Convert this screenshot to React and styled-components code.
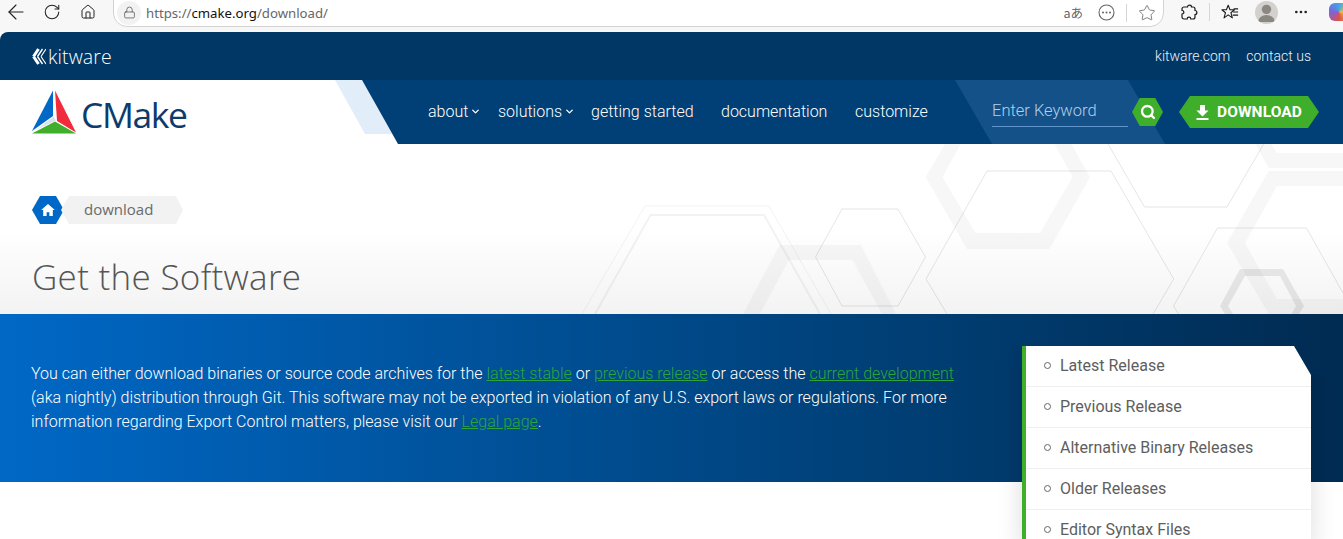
import styled, { createGlobalStyle } from 'styled-components';
import { ArrowLeft, RotateCw, Home, Lock, Star, Ellipsis, ChevronDown, Search } from 'lucide-react';

const GlobalStyle = createGlobalStyle`
    html, body {
        margin: 0;
        padding: 0;
        background: #ffffff;
        overflow: hidden;
    }
    * {
        box-sizing: border-box;
    }
`

const links = ['Latest Release', 'Previous Release', 'Alternative Binary Releases', 'Older Releases', 'Editor Syntax Files'];

function CMakeMark() {
    return (
        <svg width="44" height="44" viewBox="0 0 44 44">
            <polygon points="21,0.5 0,41 21,26" fill="#0068c6" />
            <polygon points="23,0.5 44,42.5 25,31" fill="#f12a3c" />
            <polygon points="0,43.5 23,31.5 44,43.5" fill="#3fae2a" />
            <polygon points="21.5,26.5 24,30.5 5,39.5" fill="#d9e2ec" />
        </svg>
    );
}

function KitwareMark() {
    return (
        <svg width="14" height="17" viewBox="0 0 14 17" fill="none" stroke="#fff">
            <path d="M1.5 8.5 L6.5 1 M1.5 8.5 L6.5 16" strokeWidth="3" />
            <path d="M5.5 8.5 L10.5 1 M5.5 8.5 L10.5 16" strokeWidth="1.4" />
            <path d="M9 8.5 L14 1 M9 8.5 L14 16" strokeWidth="1.2" />
        </svg>
    );
}

function MoreCircleIcon() {
    return (
        <svg width="17" height="17" viewBox="0 0 17 17" fill="none" stroke="#666">
            <circle cx="8.5" cy="8.5" r="7.5" strokeWidth="1.1" />
            <g fill="#666" stroke="none">
                <circle cx="5" cy="8.5" r="1" />
                <circle cx="8.5" cy="8.5" r="1" />
                <circle cx="12" cy="8.5" r="1" />
            </g>
        </svg>
    );
}

function PuzzleIcon() {
    return (
        <svg width="18" height="18" viewBox="0 0 18 18" fill="none" stroke="#1a1a1a" strokeWidth="1.2">
            <path d="M7.5 4 C7.5 1.5 11.5 1.5 11.5 4 H13 A2 2 0 0 1 15 6 V7.5 C17.5 7.5 17.5 11.5 15 11.5 V14 A2 2 0 0 1 13 16 H10.8 C10.8 13.5 7.2 13.5 7.2 16 H4 A2 2 0 0 1 2 14 V11 C4.5 11 4.5 7.5 2 7.5 V6 A2 2 0 0 1 4 4 Z" />
        </svg>
    );
}

function FavoritesIcon() {
    return (
        <svg width="18" height="18" viewBox="0 0 20 20" fill="none" stroke="#1a1a1a" strokeWidth="1.2">
            <path d="M8 2.5 L10 7.5 H15 L11 10.8 L12.6 16.5 L8 13.2 L3.4 16.5 L5 10.8 L1 7.5 H6 Z" strokeLinejoin="round" />
            <path d="M14 6.5 H19 M13.5 10 H19 M13 13.5 H19" />
        </svg>
    );
}

function DownloadGlyph() {
    return (
        <svg width="13" height="15" viewBox="0 0 13 15" fill="#fff">
            <path d="M4 0 H9 V5.5 H12.5 L6.5 11.5 L0.5 5.5 H4 Z" />
            <rect x="0.5" y="13" width="12" height="2" />
        </svg>
    );
}

function HexLines() {
    return (
        <HeroArt viewBox="0 144 1343 170" preserveAspectRatio="none">
            <g fill="#000" fillOpacity="0.03" fillRule="evenodd">
                <path d="M945 144 L925.5 177 L967 249 H1049.6 L1090 177 L1071.5 144 H1054.5 L1072.5 177 L1040 233 H975.6 L942.5 177 L961 144 Z" />
                <path d="M1255.4 144 L1268.6 168 H1343 V153 H1277 L1271 144 Z" />
                <path d="M1268.6 171 L1227 243 L1268.6 314 H1343 V299 H1277 L1245 243 L1277 186 H1343 V171 Z" />
                <path d="M779.5 245 L743 314 H760 L789 260 H852.5 L882 314 H896 L861 245 Z" />
                <path d="M1240 269 L1220 306 L1225 314 H1233 L1228 306 L1245 276 H1280 L1296 306 L1291.5 314 H1299 L1304 306 L1283 269 Z" fillOpacity="0.08" />
            </g>
            <g fill="none" stroke="#000" strokeOpacity="0.1" strokeWidth="1">
                <path d="M582 314 L645 206 H769 L831 314" strokeOpacity="0.05" />
                <path d="M595 314 L650.5 215 H764 L820 314" strokeWidth="2" strokeOpacity="0.05" />
                <path d="M842 209 H898 L925.5 257 L898 306 H842 L815.5 257 Z" />
                <path d="M947 314 L926 279 L987 171 H1111 L1173.7 279 L1153 314" />
                <path d="M1108 144 L1144.5 207 H1227 L1263.7 144" />
                <path d="M1178.5 314 L1173.6 306 L1217.5 228 H1306.5 L1343 293" />
            </g>
        </HeroArt>
    );
}

export default function App() {
    return (
        <Page>
            <GlobalStyle />
            <BrowserBar>
                <ToolIcon><ArrowLeft size={24} strokeWidth={1.1} /></ToolIcon>
                <ToolIcon><RotateCw size={18} strokeWidth={1.4} /></ToolIcon>
                <ToolIcon><Home size={16} strokeWidth={1.5} /></ToolIcon>
                <AddressBar>
                    <LockBadge><Lock size={13} strokeWidth={1.4} /></LockBadge>
                    <Url>https://<b>cmake.org</b>/download/</Url>
                    <AddressTools>
                        <ReadAloud>aあ</ReadAloud>
                        <ToolIcon><MoreCircleIcon /></ToolIcon>
                        <Divider $space={4} />
                        <ToolIcon><Star size={18} strokeWidth={1.1} /></ToolIcon>
                    </AddressTools>
                </AddressBar>
                <BrowserTools>
                    <ToolIcon><PuzzleIcon /></ToolIcon>
                    <Divider $space={2} />
                    <ToolIcon><FavoritesIcon /></ToolIcon>
                    <Avatar>
                        <svg width="23" height="23" viewBox="0 0 22 22" fill="#8b8883">
                            <circle cx="11" cy="8" r="4.5" />
                            <path d="M3 20 a8 6.5 0 0 1 16 0 Z" />
                        </svg>
                    </Avatar>
                    <ToolIcon><Ellipsis size={16} strokeWidth={2} /></ToolIcon>
                    <Copilot />
                </BrowserTools>
            </BrowserBar>

            <Site>
                <TopBar>
                    <KitwareLogo><KitwareMark /><span>kitware</span></KitwareLogo>
                    <TopLinks>
                        <a>kitware.com</a>
                        <a>contact us</a>
                    </TopLinks>
                </TopBar>

                <NavRow>
                    <Brand>
                        <CMakeMark />
                        <BrandName>CMake</BrandName>
                    </Brand>
                    <NavPanel>
                        <NavItem $width={70}>about<ChevronDown size={11} strokeWidth={3} /></NavItem>
                        <NavItem $width={93}>solutions<ChevronDown size={11} strokeWidth={3} /></NavItem>
                        <NavItem $width={130}>getting started</NavItem>
                        <NavItem $width={134}>documentation</NavItem>
                        <NavItem $width={100}>customize</NavItem>
                        <SearchPanel>
                            <SearchField>Enter Keyword</SearchField>
                            <SearchButton><Search size={16} strokeWidth={3.4} color="#fff" /></SearchButton>
                        </SearchPanel>
                        <DownloadButton><DownloadGlyph />DOWNLOAD</DownloadButton>
                    </NavPanel>
                </NavRow>

                <Hero>
                    <HexLines />
                    <Breadcrumb>
                        <HomeHex>
                            <svg width="14" height="12" viewBox="0 0 16 14" fill="#fff">
                                <path d="M8 0 L16 7 H13.6 V14 H9.6 V9.5 H6.4 V14 H2.4 V7 H0 Z" />
                            </svg>
                        </HomeHex>
                        <Crumb>download</Crumb>
                    </Breadcrumb>
                    <Title>Get the Software</Title>
                </Hero>

                <Intro>
                    <IntroText>
                        You can either download binaries or source code archives for the <a>latest stable</a> or <a>previous release</a> or access the <a>current development</a> (aka nightly) distribution through Git. This software may not be exported in violation of any U.S. export laws or regulations. For more information regarding Export Control matters, please visit our <a>Legal page</a>.
                    </IntroText>
                    <SideMenu>
                        {links.map((link) => (
                            <SideItem key={link}><Bullet />{link}</SideItem>
                        ))}
                    </SideMenu>
                </Intro>
            </Site>
        </Page>
    );
}

const Page = styled.div`
    width: 1343px;
    height: 539px;
    overflow: hidden;
    background: #ffffff;
    font-family: Roboto, "Liberation Sans", sans-serif;
`
const BrowserBar = styled.div`
    height: 32px;
    display: flex;
    align-items: flex-start;
    background: #f7f7f7;
    color: #222222;
    > :first-child {
        margin-left: -2px;
    }
`
const ToolIcon = styled.span`
    width: 36px;
    height: 24px;
    display: flex;
    align-items: center;
    justify-content: center;
    flex: none;
`
const AddressBar = styled.div`
    width: 1051px;
    height: 28px;
    flex: none;
    margin-left: 7px;
    margin-top: -1px;
    display: flex;
    align-items: center;
    padding: 0 0 1px 3px;
    background: #ffffff;
    border: 1px solid #d3d3d3;
    border-radius: 0 0 14px 14px;
`
const LockBadge = styled.span`
    width: 24px;
    height: 24px;
    display: flex;
    align-items: center;
    justify-content: center;
    border-radius: 50%;
    background: #f2f2f2;
    color: #555555;
`
const Url = styled.span`
    margin-left: 5px;
    font-family: "Noto Sans", sans-serif;
    font-size: 13.2px;
    color: #666666;
    b {
        font-weight: 400;
        color: #111111;
    }
`
const AddressTools = styled.div`
    margin-left: auto;
    display: flex;
    align-items: center;
    color: #666666;
    ${ToolIcon} {
        width: 32px;
    }
`
const ReadAloud = styled.span`
    margin-right: 7px;
    font-family: "Noto Sans CJK JP", sans-serif;
    font-size: 12.5px;
    color: #666666;
`
const Divider = styled.span`
    width: 1px;
    height: 18px;
    flex: none;
    margin: 0 ${props => props.$space}px;
    background: #d6d6d6;
`
const BrowserTools = styled.div`
    display: flex;
    flex: none;
    align-items: center;
    margin-left: 7px;
    height: 24px;
`
const Avatar = styled.span`
    width: 23px;
    height: 23px;
    flex: none;
    margin: 0 5px 0 7px;
    display: flex;
    align-items: center;
    justify-content: center;
    overflow: hidden;
    border-radius: 50%;
    background: #d3d1ce;
`
const Copilot = styled.span`
    width: 20px;
    height: 18px;
    flex: none;
    margin-left: 10px;
    border-radius: 6px;
    background: conic-gradient(#3aa8e8, #f0c040, #e0504c, #7d63d8, #3aa8e8);
`
const Site = styled.div`
    height: 507px;
    border-radius: 8px 0 0 0;
    overflow: hidden;
`
const TopBar = styled.div`
    height: 48px;
    display: flex;
    align-items: center;
    justify-content: space-between;
    padding: 0 32px;
    background: #003764;
    color: #ffffff;
`
const KitwareLogo = styled.div`
    display: flex;
    align-items: center;
    gap: 2px;
    font-family: "Open Sans", sans-serif;
    font-size: 19.5px;
    font-weight: 300;
    letter-spacing: 0.1px;
`
const TopLinks = styled.div`
    display: flex;
    gap: 16px;
    font-size: 14px;
    font-weight: 300;
    color: #e8f2fb;
`
const NavRow = styled.div`
    position: relative;
    height: 64px;
    display: flex;
    z-index: 1;
    &::before {
        content: "";
        position: absolute;
        left: 335px;
        top: 0;
        width: 70px;
        height: 54px;
        background: #e1edf8;
        clip-path: polygon(0 0, 27px 0, 57px 100%, 30px 100%);
    }
`
const Brand = styled.div`
    width: 362px;
    flex: none;
    display: flex;
    align-items: flex-end;
    gap: 5px;
    padding: 0 0 10px 32px;
`
const BrandName = styled.div`
    font-family: "Open Sans", sans-serif;
    font-size: 35.5px;
    line-height: 40px;
    font-weight: 400;
    letter-spacing: -1.4px;
    color: #0d3c6c;
`
const NavPanel = styled.div`
    position: relative;
    flex: 1;
    display: flex;
    align-items: center;
    padding-left: 66px;
    background: #004077;
    clip-path: polygon(0 0, 100% 0, 100% 100%, 36px 100%);
`
const NavItem = styled.a`
    width: ${props => props.$width}px;
    height: 22px;
    margin-top: -2px;
    flex: none;
    display: flex;
    align-items: center;
    gap: 2px;
    font-size: 16px;
    font-weight: 300;
    color: #ffffff;
`
const SearchPanel = styled.div`
    position: relative;
    width: 210px;
    height: 64px;
    flex: none;
    display: flex;
    align-items: center;
    gap: 4px;
    padding-left: 37px;
    &::before {
        content: "";
        position: absolute;
        inset: 0;
        background: #135188;
        clip-path: polygon(0 0, 173px 0, 100% 100%, 37px 100%);
    }
`
const SearchField = styled.div`
    position: relative;
    width: 136px;
    height: 30px;
    padding-top: 4px;
    font-size: 16.5px;
    font-weight: 300;
    color: #b4cfea;
    border-bottom: 1px solid #5f95ca;
`
const SearchButton = styled.span`
    position: relative;
    width: 31px;
    height: 28px;
    flex: none;
    display: flex;
    align-items: center;
    justify-content: center;
    background: #3fae2a;
    clip-path: polygon(25% 0, 75% 0, 100% 50%, 75% 100%, 25% 100%, 0 50%);
`
const DownloadButton = styled.span`
    width: 140px;
    height: 32px;
    flex: none;
    margin-left: 14px;
    display: flex;
    align-items: center;
    justify-content: center;
    gap: 8px;
    font-size: 15.5px;
    font-weight: 700;
    letter-spacing: 0.1px;
    color: #ffffff;
    background: #3fae2a;
    clip-path: polygon(11px 0, 129px 0, 100% 50%, 129px 100%, 11px 100%, 0 50%);
`
const Hero = styled.div`
    position: relative;
    height: 170px;
    padding: 52px 32px 0;
    background: linear-gradient(#ffffff 50%, #f3f3f3 100%);
`
const HeroArt = styled.svg`
    position: absolute;
    left: 0;
    top: 0;
    width: 100%;
    height: 100%;
`
const Breadcrumb = styled.div`
    position: relative;
    display: flex;
    align-items: center;
    height: 28px;
`
const HomeHex = styled.span`
    width: 32px;
    height: 28px;
    display: flex;
    align-items: center;
    justify-content: center;
    background: #0068c6;
    clip-path: polygon(25% 0, 75% 0, 100% 50%, 75% 100%, 25% 100%, 0 50%);
`
const Crumb = styled.span`
    width: 122px;
    height: 28px;
    margin-left: -3px;
    padding: 0 0 2px 23px;
    display: flex;
    align-items: center;
    font-family: "Open Sans", sans-serif;
    font-size: 15px;
    color: #6a6a6a;
    background: #f2f2f2;
    clip-path: polygon(8px 0, 115px 0, 100% 50%, 115px 100%, 8px 100%, 0 50%);
`
const Title = styled.h1`
    position: relative;
    margin: 30px 0 0;
    font-family: "Open Sans", sans-serif;
    font-size: 35px;
    line-height: 46px;
    font-weight: 300;
    letter-spacing: 0.3px;
    color: #555555;
`
const Intro = styled.div`
    height: 168px;
    display: flex;
    justify-content: space-between;
    padding: 32px 32px 0 31px;
    background: linear-gradient(90deg, #0068c6 0%, #004077 65%, #002b52 100%);
`
const IntroText = styled.p`
    width: 930px;
    margin: 16px 0 0;
    font-size: 16px;
    font-weight: 300;
    line-height: 24px;
    color: #ffffff;
    a {
        color: #2ea43a;
        text-decoration: underline;
    }
`
const SideMenu = styled.div`
    position: relative;
    width: 289px;
    flex: none;
    align-self: flex-start;
    background: #ffffff;
    border-left: 4px solid #3fae2a;
    box-shadow: 0 0 24px rgba(0, 0, 0, 0.14);
    clip-path: polygon(-30px 0, 272px 0, 289px 29px, 319px 29px, 319px 100%, -30px 100%);
`
const SideItem = styled.div`
    height: 41px;
    display: flex;
    align-items: center;
    padding: 0 0 2px 18px;
    font-size: 16px;
    color: #5e5e5e;
    border-bottom: 1px solid #efefef;
`
const Bullet = styled.span`
    width: 7px;
    height: 7px;
    margin-right: 9px;
    border: 1.5px solid #666666;
    border-radius: 50%;
`
